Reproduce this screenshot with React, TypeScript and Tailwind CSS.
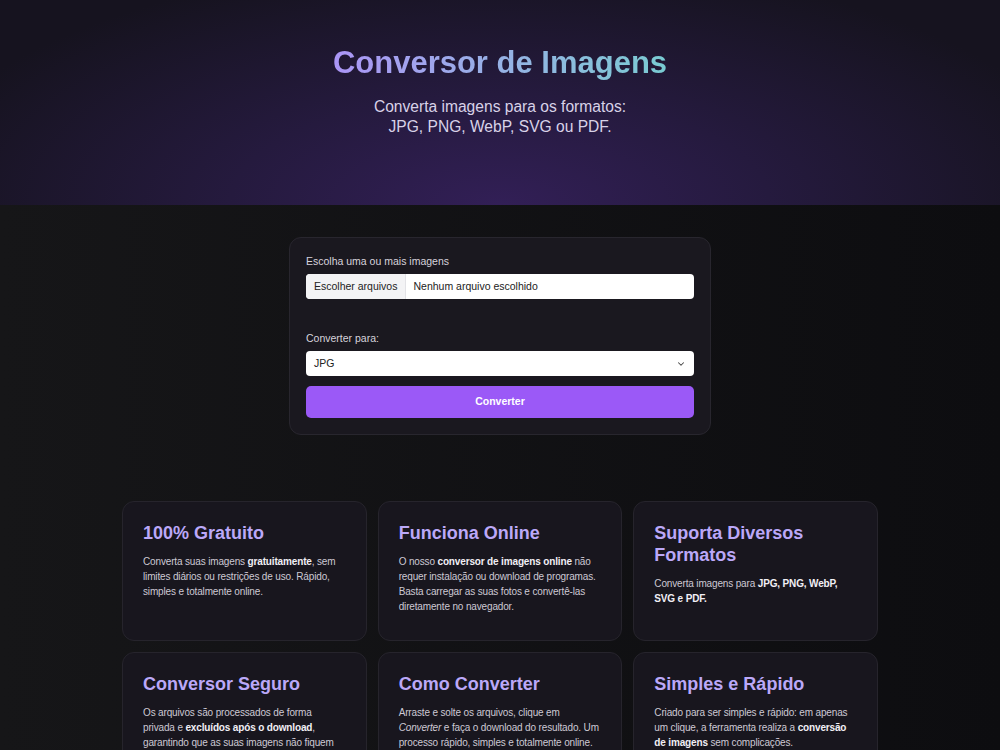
import React from "react";

const features = [
  {
    title: "100% Gratuito",
    body: (
      <>
        Converta suas imagens <b className="font-bold text-[#f1eff5]">gratuitamente</b>, sem limites diários ou
        restrições de uso. Rápido, simples e totalmente online.
      </>
    ),
  },
  {
    title: "Funciona Online",
    body: (
      <>
        O nosso <b className="font-bold text-[#f1eff5]">conversor de imagens online</b> não requer instalação ou
        download de programas. Basta carregar as suas fotos e convertê-las diretamente no navegador.
      </>
    ),
  },
  {
    title: "Suporta Diversos Formatos",
    body: (
      <>
        Converta imagens para <b className="font-bold text-[#f1eff5]">JPG, PNG, WebP, SVG e PDF.</b>
      </>
    ),
  },
  {
    title: "Conversor Seguro",
    body: (
      <>
        Os arquivos são processados de forma privada e{" "}
        <b className="font-bold text-[#f1eff5]">excluídos após o download</b>, garantindo que as suas imagens
        não fiquem armazenadas.
      </>
    ),
  },
  {
    title: "Como Converter",
    body: (
      <>
        Arraste e solte os arquivos, clique em <i>Converter</i> e faça o download do resultado. Um processo
        rápido, simples e totalmente online.
      </>
    ),
  },
  {
    title: "Simples e Rápido",
    body: (
      <>
        Criado para ser simples e rápido: em apenas um clique, a ferramenta realiza a{" "}
        <b className="font-bold text-[#f1eff5]">conversão de imagens</b> sem complicações.
      </>
    ),
  },
];

const FeatureCard = ({ title, body }: { title: string; body: React.ReactNode }) => (
  <div className="min-h-[140px] rounded-xl border border-[#26242c] bg-[#18161e] px-5 pt-5 pb-6">
    <h2 className="text-[18px] font-bold leading-[22px] text-[#bba8f8]">{title}</h2>
    <p className="mt-[10px] text-[10px] leading-[15px] tracking-[-0.15px] text-[#cdc9d4]">{body}</p>
  </div>
);

export default function App() {
  return (
    <div
      className="min-h-[750px] bg-gradient-to-r from-[#161618] to-[#0d0d10] text-white"
      style={{ fontFamily: '"Liberation Sans", Arial, sans-serif' }}
    >
      <header className="flex h-[205px] flex-col items-center bg-[radial-gradient(ellipse_60%_120%_at_50%_100%,#321f56_0%,#251a3e_45%,#16131f_100%)] pt-[44px]">
        <h1 className="bg-gradient-to-r from-[#ab95f6] to-[#79cbd2] bg-clip-text text-[31px] font-bold leading-[38px] text-transparent">
          Conversor de Imagens
        </h1>
        <p className="mt-[15px] text-center text-[15.6px] leading-[20px] text-[#d8d2e8]">
          Converta imagens para os formatos:
          <br />
          JPG, PNG, WebP, SVG ou PDF.
        </p>
      </header>

      <main className="flex flex-col items-center pt-8 pb-10">
        <div className="w-[422px] rounded-xl border border-[#28262e] bg-[#1a181f] p-4">
          <label className="block text-[10.5px] leading-[14px] text-[#d6d3dc]">Escolha uma ou mais imagens</label>
          <div className="mt-[6px] flex h-[25px] items-center overflow-hidden rounded-[4px] bg-white text-[10.5px] text-[#222]">
            <span className="flex h-full items-center border-r border-[#e2e2e6] bg-[#f3f3f5] px-2">
              Escolher arquivos
            </span>
            <span className="pl-[7px]">Nenhum arquivo escolhido</span>
          </div>

          <label className="mt-[32px] block text-[10.5px] leading-[14px] text-[#d6d3dc]">Converter para:</label>
          <div className="mt-[6px] flex h-[25px] items-center justify-between rounded-[4px] bg-white px-2 text-[10.5px] text-[#222]">
            <span>JPG</span>
            <svg width="10" height="10" viewBox="0 0 24 24" fill="none" stroke="#444" strokeWidth="2.5" strokeLinecap="round" strokeLinejoin="round">
              <path d="M6 9l6 6 6-6" />
            </svg>
          </div>

          <button className="mt-[10px] flex h-[32px] w-full items-center justify-center rounded-[5px] bg-[#9b59f7] text-[10.5px] font-bold text-white">
            Converter
          </button>
        </div>

        <div className="mt-[66px] grid w-[756px] grid-cols-3 gap-[11px]">
          {features.map((f) => (
            <FeatureCard key={f.title} title={f.title} body={f.body} />
          ))}
        </div>
      </main>
    </div>
  );
}
